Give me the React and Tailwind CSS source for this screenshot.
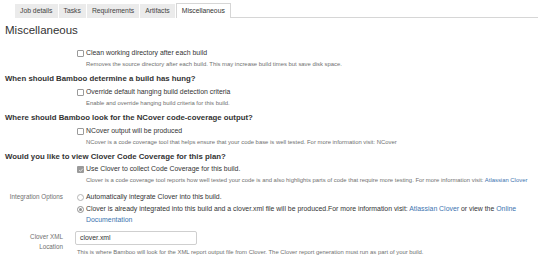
const TABS = ['Job details', 'Tasks', 'Requirements', 'Artifacts', 'Miscellaneous']

function Tabs() {
  return (
    <div className="flex items-end pt-[3px]">
      <div className="w-[15px] shrink-0" />
      {TABS.map((tab) =>
        tab === 'Miscellaneous' ? (
          <div
            key={tab}
            className="h-[15px] px-[5px] border border-b-0 border-[#d6d6d6] bg-white text-[6.8px] leading-[13px] text-[#333]"
          >
            {tab}
          </div>
        ) : (
          <div
            key={tab}
            className="h-[14px] px-[5px] mr-px bg-[#ebebeb] text-[6.8px] leading-[14px] text-[#444]"
          >
            {tab}
          </div>
        )
      )}
      <div className="flex-1 mr-[2px] border-b border-[#d6d6d6]" />
    </div>
  )
}

function Checkbox({ checked }) {
  if (checked) {
    return (
      <span className="w-[7px] h-[7px] shrink-0 rounded-[1px] bg-[#9a9a9a] flex items-center justify-center">
        <svg viewBox="0 0 8 8" className="w-[6px] h-[6px]">
          <path d="M1.5 4.2 L3.2 5.8 L6.5 2.2" fill="none" stroke="#e6e6e6" strokeWidth="1.3" />
        </svg>
      </span>
    )
  }
  return <span className="w-[7px] h-[7px] shrink-0 rounded-[1px] border border-[#9a9a9a] bg-white" />
}

function Radio({ checked }) {
  return (
    <span
      className={`w-[7px] h-[7px] shrink-0 rounded-full border flex items-center justify-center bg-white ${
        checked ? 'border-[#8f8f8f]' : 'border-[#b5b5b5]'
      }`}
    >
      {checked && <span className="w-[3px] h-[3px] rounded-full bg-[#8f8f8f]" />}
    </span>
  )
}

// form row: grey label column on the left, field column from x=77
function Row({ label, labelClass = '', children, className = '' }) {
  return (
    <div className={`flex ${className}`}>
      <div className={`w-[57px] ml-px shrink-0 text-right text-[6.3px] leading-[10px] text-[#707070] ${labelClass}`}>
        {label}
      </div>
      <div className="ml-[14px] flex-1 min-w-0">{children}</div>
    </div>
  )
}

function CheckRow({ text, checked, className = '' }) {
  return (
    <Row className={className}>
      <div className="flex items-center gap-[2px] h-[11px]">
        <Checkbox checked={checked} />
        <span className="text-[6.9px] text-[#333]">{text}</span>
      </div>
    </Row>
  )
}

function Desc({ children, className = '' }) {
  return (
    <Row className={className}>
      <div className="text-[5.9px] leading-[9px] text-[#707070] whitespace-nowrap pl-[9px]">{children}</div>
    </Row>
  )
}

function Question({ children, className = '' }) {
  return <h3 className={`text-[7.8px] leading-[11px] font-bold text-[#333] ${className}`}>{children}</h3>
}

const Link = ({ children }) => <span className="text-[#3b73af]">{children}</span>

export default function App() {
  return (
    <div className="w-[540px] h-[258px] overflow-hidden bg-white font-['Liberation_Sans',Arial,sans-serif]">
      <Tabs />
      <div className="pl-[5px]">
        <h2 className="mt-[5px] text-[11.5px] leading-[14px] text-[#333]">Miscellaneous</h2>

        <CheckRow className="mt-[11px]" text="Clean working directory after each build" />
        <Desc className="mt-px">
          Removes the source directory after each build. This may increase build times but save disk space.
        </Desc>

        <Question className="mt-[4px]">When should Bamboo determine a build has hung?</Question>
        <CheckRow className="mt-[3px]" text="Override default hanging build detection criteria" />
        <Desc className="mt-px">Enable and override hanging build criteria for this build.</Desc>

        <Question className="mt-[4px]">Where should Bamboo look for the NCover code-coverage output?</Question>
        <CheckRow className="mt-[3px]" text="NCover output will be produced" />
        <Desc className="mt-px">
          NCover is a code coverage tool that helps ensure that your code base is well tested. For more information
          visit: NCover
        </Desc>

        <Question className="mt-[4px]">Would you like to view Clover Code Coverage for this plan?</Question>
        <CheckRow className="mt-[2px]" checked text="Use Clover to collect Code Coverage for this build." />
        <Desc className="mt-px">
          Clover is a code coverage tool reports how well tested your code is and also highlights parts of code that
          require more testing. For more information visit: <Link>Atlassian Clover</Link>
        </Desc>

        <Row className="mt-[7px]" label="Integration Options">
          <div className="flex items-center gap-[2px] h-[11px]">
            <Radio />
            <span className="text-[6.9px] text-[#333]">Automatically integrate Clover into this build.</span>
          </div>
        </Row>
        <Row className="mt-[1px]">
          <div className="flex items-start gap-[2px] pr-[8px]">
            <span className="mt-[2px]">
              <Radio checked />
            </span>
            <span className="text-[6.9px] leading-[10.5px] text-[#333]">
              Clover is already integrated into this build and a clover.xml file will be produced.For more
              information visit: <Link>Atlassian Clover</Link> or view the <Link>Online</Link>{' '}
              <Link>Documentation</Link>
            </span>
          </div>
        </Row>

        <Row className="mt-[6px]" labelClass="pt-[1px]" label="Clover XML Location">
          <div className="-ml-[2px]">
            <div className="w-[122px] h-[14px] border border-[#cfcfcf] rounded-[2px] bg-white px-[4px] text-[6.9px] leading-[12px] text-[#333]">
              clover.xml
            </div>
            <div className="mt-[3px] text-[5.9px] leading-[9px] text-[#707070] whitespace-nowrap pl-[2px]">
              This is where Bamboo will look for the XML report output file from Clover. The Clover report generation
              must run as part of your build.
            </div>
          </div>
        </Row>
      </div>
    </div>
  )
}
